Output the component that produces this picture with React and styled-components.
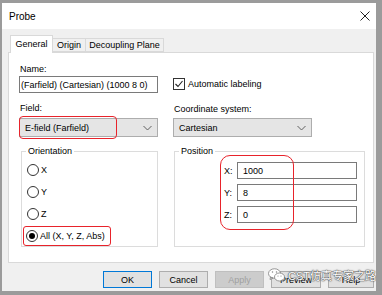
import styled, { createGlobalStyle } from "styled-components";

const GlobalStyle = createGlobalStyle`
  html, body {
    margin: 0;
    padding: 0;
    background: #ffffff;
  }
  body {
    font-family: "Liberation Sans", Arial, sans-serif;
    font-size: 9px;
    color: #000;
  }
`;

const Window = styled.div`
  width: 382px;
  height: 295px;
  box-sizing: border-box;
  border-style: solid;
  border-color: #9b9b9b;
  border-width: 3px 6px 4px 2px;
  display: flex;
  flex-direction: column;
  position: relative;
  overflow: hidden;
`;

const TitleBar = styled.div`
  height: 26px;
  flex: none;
  background: #fff;
  display: flex;
  align-items: center;
  justify-content: space-between;
  padding: 0 6px 0 7px;
  font-size: 10px;
`;

const Body = styled.div`
  flex: 1;
  background: #f0f0f0;
  padding: 6px 0 0 6px;
  display: flex;
  flex-direction: column;
`;

const TabRow = styled.div`
  display: flex;
  align-items: flex-end;
  height: 17px;
  padding-left: 2px;
  position: relative;
  z-index: 1;
`;

const Tab = styled.div`
  box-sizing: border-box;
  height: ${(p) => (p.$active ? "18px" : "14px")};
  width: ${(p) => p.$w}px;
  background: ${(p) => (p.$active ? "#fff" : "#f0f0f0")};
  border: 1px solid #d9d9d9;
  border-bottom: ${(p) => (p.$active ? "none" : "1px solid #d9d9d9")};
  margin-left: ${(p) => (p.$active ? "0" : "-1px")};
  margin-bottom: ${(p) => (p.$active ? "-1px" : "0")};
  display: flex;
  align-items: center;
  justify-content: center;
  padding-bottom: ${(p) => (p.$active ? "2px" : "0")};
`;

const Panel = styled.div`
  box-sizing: border-box;
  width: 366px;
  height: 211px;
  background: #fff;
  border: 1px solid #d9d9d9;
  padding: 10px 0 0 10px;
  display: grid;
  grid-template-columns: 139px 192px;
  column-gap: 15px;
  align-content: start;
`;

const Label = styled.div`
  height: 12px;
  line-height: 12px;
  padding-left: 1px;
  margin-top: ${(p) => p.$top || 0}px;
`;

const TextBox = styled.div`
  box-sizing: border-box;
  height: 17px;
  width: ${(p) => p.$w || 139}px;
  border: 1px solid #7a7a7a;
  background: #fff;
  display: flex;
  align-items: center;
  overflow: hidden;
  white-space: nowrap;
  padding: 0 4px 0 5px;
  margin-top: ${(p) => p.$top || 0}px;
`;

const Scrolled = styled.span`
  margin-left: -4px;
`;

const CheckRow = styled.label`
  display: flex;
  align-items: center;
  gap: 3px;
  margin-top: 3px;
  height: 12px;
  align-self: start;
`;

const CheckBox = styled.span`
  box-sizing: border-box;
  width: 12px;
  height: 12px;
  border: 1px solid #333;
  display: flex;
  align-items: center;
  justify-content: center;
`;

const DropWrap = styled.div`
  position: relative;
  margin-top: 3px;
`;

const Dropdown = styled.div`
  box-sizing: border-box;
  height: 19px;
  width: 139px;
  background: #e5e5e5;
  border: 1px solid #adadad;
  display: flex;
  align-items: center;
  justify-content: space-between;
  padding: 0 5px 0 5px;
`;

const Mark = styled.div`
  position: absolute;
  border: 1.5px solid #e8232b;
  border-radius: ${(p) => p.$r || 3}px;
  pointer-events: none;
  left: ${(p) => p.$l}px;
  top: ${(p) => p.$t}px;
  width: ${(p) => p.$w}px;
  height: ${(p) => p.$h}px;
  box-sizing: border-box;
`;

const Group = styled.fieldset`
  box-sizing: border-box;
  margin: 9px 0 0 ${(p) => p.$ml || 0}px;
  padding: 0;
  border: 1px solid #dcdcdc;
  height: 101px;
  width: ${(p) => p.$w}px;
  position: relative;
  min-width: 0;
`;

const Legend = styled.legend`
  padding: 0 2px;
  margin-left: 4px;
  font-size: 9px;
  line-height: 10px;
`;

const RadioList = styled.div`
  display: flex;
  flex-direction: column;
  gap: 10px;
  padding: 8px 0 0 5px;
`;

const RadioRow = styled.div`
  display: flex;
  align-items: center;
  gap: 2px;
  height: 12px;
  align-self: flex-start;
  ${(p) =>
    p.$marked &&
    `
    border: 1.5px solid #e8232b;
    border-radius: 3px;
    height: 20px;
    box-sizing: border-box;
    padding: 0 5px 0 2px;
    margin: -4px 0 0 -4px;
  `}
`;

const Radio = styled.span`
  box-sizing: border-box;
  width: 12px;
  height: 12px;
  border-radius: 50%;
  border: 1px solid #333;
  background: #fff;
  display: flex;
  align-items: center;
  justify-content: center;
  &::after {
    content: "";
    width: 6px;
    height: 6px;
    border-radius: 50%;
    background: ${(p) => (p.$on ? "#000" : "transparent")};
  }
`;

const CoordList = styled.div`
  display: flex;
  flex-direction: column;
  gap: 5px;
  padding: 6px 0 0 49px;
  position: relative;
`;

const CoordRow = styled.div`
  display: flex;
  align-items: center;
  gap: 4px;
`;

const CoordLabel = styled.span`
  width: 9px;
`;

const ButtonRow = styled.div`
  display: flex;
  justify-content: flex-end;
  gap: 7px;
  margin-top: 8px;
  padding-right: 2px;
  width: 366px;
`;

const Button = styled.div`
  box-sizing: border-box;
  width: ${(p) => p.$w || 49}px;
  height: 17px;
  background: ${(p) => (p.$disabled ? "#cccccc" : "#e1e1e1")};
  color: ${(p) => (p.$disabled ? "#a0a0a0" : "#000")};
  border: 1px solid ${(p) => (p.$default ? "#0078d7" : p.$disabled ? "#bfbfbf" : "#adadad")};
  display: flex;
  align-items: center;
  justify-content: center;
`;

const Watermark = styled.div`
  position: absolute;
  left: 266px;
  top: 264px;
  display: flex;
  align-items: center;
  gap: 3px;
  color: #fff;
  font-family: "Liberation Sans", "Noto Sans CJK SC", sans-serif;
  font-size: 11px;
  white-space: nowrap;
  text-shadow: 0 0 1px #444, 0 0 1px #444, 0 0 2px #666;
  pointer-events: none;
`;

const WeChat = () => (
  <svg width="17" height="14" viewBox="0 0 34 28">
    <g fill="#fff" stroke="#777" strokeWidth="1.5">
      <ellipse cx="13" cy="11" rx="12" ry="9.5" />
      <path d="M5 18 L4 23 L10 20 Z" />
      <ellipse cx="23" cy="18" rx="10" ry="8" />
      <path d="M29 24 L31 27 L26 25 Z" />
    </g>
    <g fill="#888">
      <circle cx="9" cy="8" r="1.5" />
      <circle cx="17" cy="8" r="1.5" />
      <circle cx="20" cy="16" r="1.2" />
      <circle cx="26" cy="16" r="1.2" />
    </g>
  </svg>
);

const Chevron = () => (
  <svg width="9" height="6" viewBox="0 0 9 6">
    <path d="M0.5 1 L4.5 5 L8.5 1" fill="none" stroke="#606060" strokeWidth="1" />
  </svg>
);

export default function App() {
  return (
    <>
      <GlobalStyle />
      <Window>
        <TitleBar>
          <span>Probe</span>
          <svg width="10" height="10" viewBox="0 0 10 10">
            <path d="M0.5 0.5 L9.5 9.5 M9.5 0.5 L0.5 9.5" stroke="#222" strokeWidth="1" />
          </svg>
        </TitleBar>
        <Body>
          <TabRow>
            <Tab $active $w={43}>General</Tab>
            <Tab $w={34}>Origin</Tab>
            <Tab $w={79}>Decoupling Plane</Tab>
          </TabRow>
          <Panel>
            <Label>Name:</Label>
            <div />
            <TextBox $top={1}>
              <Scrolled>(Farfield) (Cartesian) (1000 8 0)</Scrolled>
            </TextBox>
            <CheckRow>
              <CheckBox>
                <svg width="10" height="10" viewBox="0 0 10 10">
                  <path d="M1.5 5 L4 7.5 L8.5 2" fill="none" stroke="#222" strokeWidth="1.1" />
                </svg>
              </CheckBox>
              Automatic labeling
            </CheckRow>
            <Label $top={9}>Field:</Label>
            <Label $top={10}>Coordinate system:</Label>
            <DropWrap>
              <Dropdown>
                <span>E-field (Farfield)</span>
                <Chevron />
              </Dropdown>
              <Mark $l={0} $t={-2} $w={98} $h={23} $r={4} />
            </DropWrap>
            <DropWrap>
              <Dropdown>
                <span>Cartesian</span>
                <Chevron />
              </Dropdown>
            </DropWrap>
            <Group $w={137} $ml={2}>
              <Legend>Orientation</Legend>
              <RadioList>
                <RadioRow>
                  <Radio />X
                </RadioRow>
                <RadioRow>
                  <Radio />Y
                </RadioRow>
                <RadioRow>
                  <Radio />Z
                </RadioRow>
                <RadioRow $marked>
                  <Radio $on />All (X, Y, Z, Abs)
                </RadioRow>
              </RadioList>
            </Group>
            <Group $w={191} $ml={1}>
              <Legend>Position</Legend>
              <CoordList>
                <CoordRow>
                  <CoordLabel>X:</CoordLabel>
                  <TextBox $w={120}>1000</TextBox>
                </CoordRow>
                <CoordRow>
                  <CoordLabel>Y:</CoordLabel>
                  <TextBox $w={120}>8</TextBox>
                </CoordRow>
                <CoordRow>
                  <CoordLabel>Z:</CoordLabel>
                  <TextBox $w={120}>0</TextBox>
                </CoordRow>
                <Mark $l={45} $t={-1} $w={74} $h={75} $r={10} />
              </CoordList>
            </Group>
          </Panel>
          <ButtonRow>
            <Button $default>OK</Button>
            <Button>Cancel</Button>
            <Button $disabled>Apply</Button>
            <Button $w={50}>Preview</Button>
            <Button $w={46}>Help</Button>
          </ButtonRow>
        </Body>
        <Watermark>
          <WeChat />
          <span>CST仿真专家之路</span>
        </Watermark>
      </Window>
    </>
  );
}
